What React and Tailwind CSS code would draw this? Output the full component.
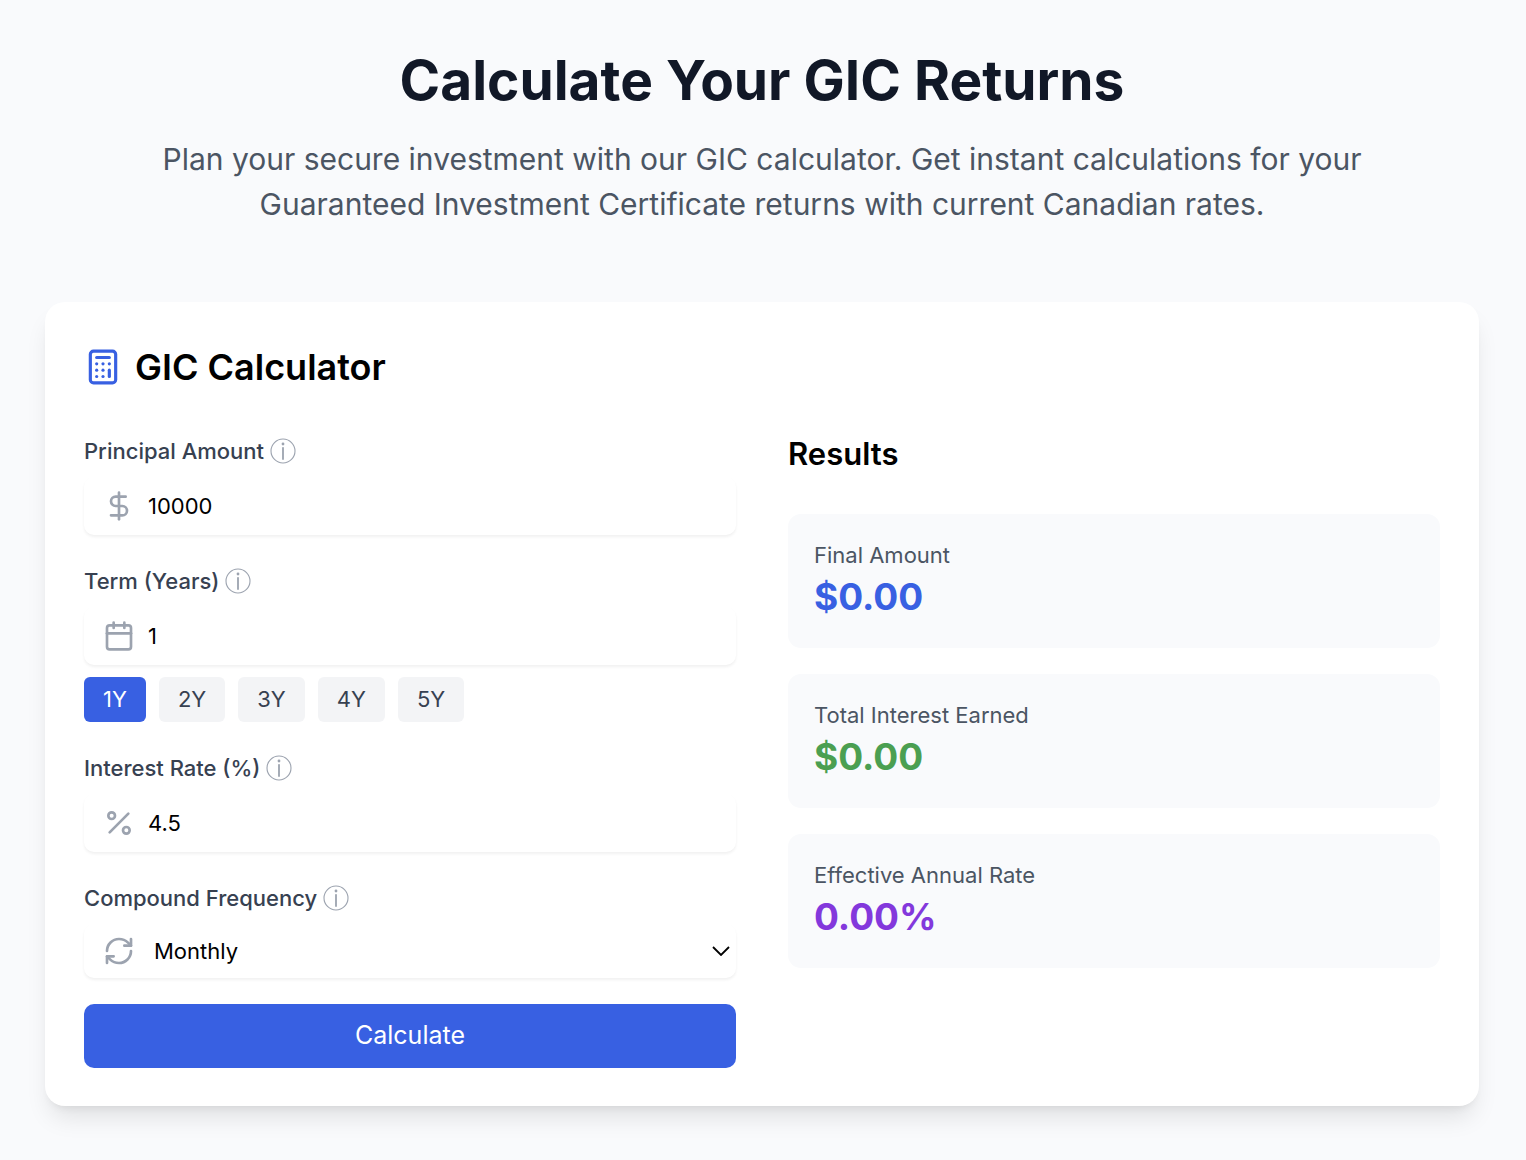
import { useState } from "react";
import { Calculator, Calendar, DollarSign, Percent, RefreshCw } from "lucide-react";

function InfoMark() {
  return (
    <svg className="size-[26px] shrink-0 text-[#9ca3af]" viewBox="0 0 26 26" fill="none" stroke="currentColor" aria-hidden="true">
      <circle cx="13" cy="13" r="12" strokeWidth="1.1" />
      <circle cx="13" cy="6" r="1.4" fill="currentColor" stroke="none" />
      <path d="M13 9.8V21" strokeWidth="1.8" strokeLinecap="round" />
    </svg>
  );
}

function Field({ id, label, icon: Icon, children, after }) {
  return (
    <div>
      <div className="mb-[6px] flex h-10 items-center gap-[6px]">
        <label htmlFor={id} className="text-[22px] font-medium text-[#374151]">
          {label}
        </label>
        <InfoMark />
      </div>
      <div className="relative">
        <Icon className="pointer-events-none absolute top-1/2 left-[19px] size-8 -translate-y-1/2 text-[#9ca3af]" strokeWidth={2} />
        {children}
      </div>
      {after}
    </div>
  );
}

const boxClass =
  "block w-full appearance-none rounded-[10px] bg-white text-[22px] text-black shadow-[0_2px_3px_rgba(0,0,0,0.06)] outline-none";

function ResultCard({ label, value, color }) {
  return (
    <div className="rounded-[13px] bg-[#f9fafc] p-[26px]">
      <div className="mb-[2px] text-[22px] leading-[30px] text-[#4b5563]">{label}</div>
      <div className={`text-[37px] leading-[50px] font-bold ${color}`}>{value}</div>
    </div>
  );
}

export default function App() {
  const [principal, setPrincipal] = useState("10000");
  const [term, setTerm] = useState("1");
  const [rate, setRate] = useState("4.5");
  const [frequency, setFrequency] = useState("Monthly");

  return (
    <main className="min-h-screen bg-[#f9fafc] pt-12 pr-[47px] pb-[54px] pl-[45px] font-['Inter',sans-serif]">
      <header className="mb-[75px] text-center">
        <h1 className="mb-[25px] text-[55px] leading-[64px] font-bold text-[#111827]">Calculate Your GIC Returns</h1>
        <p className="mx-auto max-w-[1229px] text-[30px] leading-[45px] text-[#4b5563]">
          Plan your secure investment with our GIC calculator. Get instant calculations for your Guaranteed Investment
          Certificate returns with current Canadian rates.
        </p>
      </header>

      <section className="rounded-[20px] bg-white px-[39px] pt-[39px] pb-[38px] shadow-[0_16px_24px_-5px_rgba(0,0,0,0.1),0_6px_10px_-6px_rgba(0,0,0,0.1)]">
        <h2 className="mb-[38px] flex items-center gap-[13px] text-[36px] leading-[52px] font-semibold text-black">
          <Calculator className="size-[38px] text-[#3860e2]" strokeWidth={2} />
          GIC Calculator
        </h2>

        <div className="grid grid-cols-2 gap-[52px]">
          <form className="flex flex-col gap-[26px]" onSubmit={(e) => e.preventDefault()}>
            <Field id="principal" label="Principal Amount" icon={DollarSign}>
              <input id="principal" className={`${boxClass} h-[58px] pl-16`} value={principal} onChange={(e) => setPrincipal(e.target.value)} />
            </Field>

            <Field
              id="term"
              label="Term (Years)"
              icon={Calendar}
              after={
                <div className="mt-3 flex gap-[13px]">
                  {["1", "2", "3", "4", "5"].map((y) => (
                    <button
                      key={y}
                      type="button"
                      onClick={() => setTerm(y)}
                      className={`h-[45px] rounded-[6px] px-[19px] text-[22px] ${
                        term === y ? "bg-[#3860e2] text-white" : "bg-[#f3f4f6] text-[#374151]"
                      }`}
                    >
                      {y}Y
                    </button>
                  ))}
                </div>
              }
            >
              <input id="term" className={`${boxClass} h-[58px] pl-16`} value={term} onChange={(e) => setTerm(e.target.value)} />
            </Field>

            <Field id="rate" label="Interest Rate (%)" icon={Percent}>
              <input id="rate" className={`${boxClass} h-[58px] pl-16`} value={rate} onChange={(e) => setRate(e.target.value)} />
            </Field>

            <Field id="frequency" label="Compound Frequency" icon={RefreshCw}>
              <select id="frequency" className={`${boxClass} h-[54px] pl-[70px]`} value={frequency} onChange={(e) => setFrequency(e.target.value)}>
                <option>Monthly</option>
                <option>Quarterly</option>
                <option>Semi-Annually</option>
                <option>Annually</option>
              </select>
              <svg className="pointer-events-none absolute top-1/2 right-[6px] h-[10px] w-[18px] -translate-y-1/2" viewBox="0 0 18 10" fill="none" stroke="black" strokeWidth="1.8" aria-hidden="true">
                <path d="M1 1l8 8 8-8" />
              </svg>
            </Field>

            <button type="submit" className="h-16 rounded-[10px] bg-[#3860e2] text-[25px] text-white">
              Calculate
            </button>
          </form>

          <section>
            <h3 className="mb-[38px] text-[31px] leading-[45px] font-semibold text-black">Results</h3>
            <div className="flex flex-col gap-[26px]">
              <ResultCard label="Final Amount" value="$0.00" color="text-[#3860e2]" />
              <ResultCard label="Total Interest Earned" value="$0.00" color="text-[#4b9f51]" />
              <ResultCard label="Effective Annual Rate" value="0.00%" color="text-[#8338dc]" />
            </div>
          </section>
        </div>
      </section>
    </main>
  );
}
